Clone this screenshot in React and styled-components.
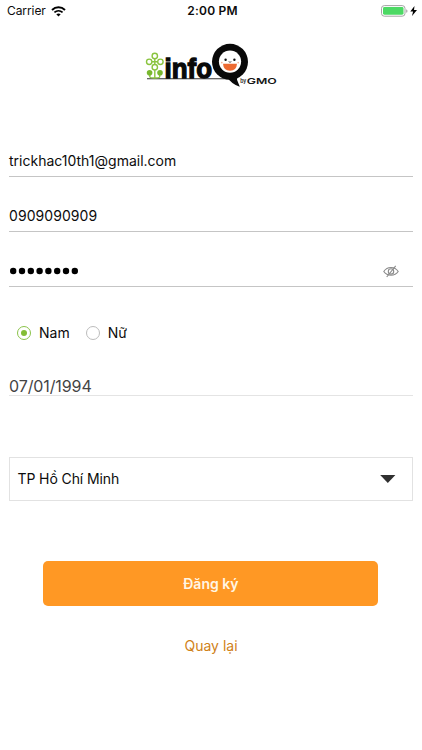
import React from 'react';
import styled, { createGlobalStyle } from 'styled-components';

const GlobalStyle = createGlobalStyle`
  * { box-sizing: border-box; }
  body { margin: 0; background: #fff; font-family: Inter, "Liberation Sans", sans-serif; color: #0c0c0c; }
  button { font-family: inherit; border: 0; padding: 0; }
`;

const Screen = styled.main`
  display: flex;
  flex-direction: column;
  width: 422px;
  height: 750px;
  overflow: hidden;
  background: #fff;
`;

const StatusBar = styled.header`
  display: grid;
  grid-template-columns: 1fr auto 1fr;
  align-items: center;
  height: 22px;
  padding: 0 4px 0 7px;
  font-size: 12px;
  line-height: 22px;
`;

const Carrier = styled.div`
  display: flex;
  align-items: center;
  gap: 5px;
  letter-spacing: -0.08px;
`;

const Clock = styled.div`
  font-weight: 600;
  letter-spacing: 0.2px;
`;

const Power = styled.div`
  display: flex;
  justify-content: flex-end;
`;

const Brand = styled.div`
  display: flex;
  margin: 16px 0 0 140px;
  height: 55px;
`;

const Form = styled.form`
  display: flex;
  flex-direction: column;
  margin: 53px 9px 0;
`;

const Field = styled.div`
  display: flex;
  align-items: center;
  justify-content: space-between;
  height: 31px;
  margin-bottom: 24px;
  padding-right: 14px;
  border-bottom: 1px solid #c5c5c5;
  font-size: 14px;
  line-height: 30px;
  letter-spacing: ${(p) => p.$spacing || '0'};
`;

const RadioGroup = styled.div`
  display: flex;
  align-items: center;
  height: 20px;
  margin: 12px 0 0 8px;
  gap: 16px;
`;

const RadioOption = styled.label`
  display: flex;
  align-items: center;
  gap: 8px;
  font-size: 14px;
  line-height: 20px;
`;

const RadioMark = styled.span`
  display: flex;
  align-items: center;
  justify-content: center;
  width: 14px;
  height: 14px;
  border: 1px solid ${(p) => (p.$checked ? '#8bc34a' : '#bcbcbc')};
  border-radius: 50%;

  &::after {
    content: '';
    width: 6px;
    height: 6px;
    border-radius: 50%;
    background: ${(p) => (p.$checked ? '#83bd35' : 'transparent')};
  }
`;

const DateField = styled.div`
  height: 21px;
  margin-top: 32px;
  border-bottom: 1px solid #e4e4e4;
  color: #444;
  font-size: 16px;
  line-height: 22px;
  letter-spacing: -0.1px;
`;

const Select = styled.div`
  display: flex;
  align-items: center;
  justify-content: space-between;
  height: 44px;
  margin-top: 61px;
  padding: 0 16.5px 0 7.5px;
  border: 1px solid #e2e2e2;
  font-size: 14px;
  letter-spacing: -0.1px;
`;

const SelectValue = styled.span`
  padding-bottom: 2px;
`;

const Submit = styled.button`
  width: 335px;
  height: 45px;
  margin: 60px 0 0 34.4px;
  border-radius: 5px;
  background: #ff9824;
  color: #fff6e4;
  font-size: 14px;
  font-weight: 600;
`;

const Back = styled.button`
  align-self: center;
  height: 20px;
  margin-top: 30px;
  background: none;
  color: #cf8118;
  font-size: 14px;
  line-height: 20px;
`;

const WifiIcon = () => (
  <svg width="15" height="11" viewBox="0 0 15 11" fill="none">
    <path d="M1 3.9C4.7.5 10.3.5 14 3.9" stroke="#000" strokeWidth="2" />
    <path d="M3.4 6.4c2.4-2.1 5.8-2.1 8.2 0" stroke="#000" strokeWidth="1.8" />
    <path d="M5.3 8.3c1.3-1.1 3.1-1.1 4.4 0L7.5 10.5Z" fill="#000" />
  </svg>
);

const BatteryIcon = () => (
  <svg width="37" height="12" viewBox="0 0 37 12">
    <rect x=".5" y=".6" width="23.5" height="10.6" rx="2.8" fill="#fff" stroke="#a4a4a4" />
    <rect x="2" y="2.1" width="20.5" height="7.6" rx="1.4" fill="#4cd964" />
    <path d="M25.2 4.2q1.3.4 1.3 1.8t-1.3 1.8Z" fill="#a4a4a4" />
    <path d="M33.5 1 29.3 6.5h2.8l-1.1 4.4 5-5.8h-3Z" fill="#000" />
  </svg>
);

const PasswordDots = () => (
  <svg width="72" height="8" viewBox="0 0 72 8">
    {Array.from({ length: 8 }, (_, i) => (
      <circle key={i} cx={4.2 + i * 8.8} cy="4" r="3.2" fill="#000" />
    ))}
  </svg>
);

const HiddenIcon = () => (
  <svg width="16" height="13" viewBox="0 0 16 13" fill="none" stroke="#8a8a8a" strokeWidth="1.1">
    <path d="M.8 6.5C4.2 1.2 11.8 1.2 15.2 6.5 11.8 11.4 4.2 11.4.8 6.5Z" />
    <circle cx="8" cy="6.4" r="2.7" />
    <path d="m12.7.8-9 11.2" />
  </svg>
);

const ArrowIcon = () => (
  <svg width="16" height="8" viewBox="0 0 16 8">
    <path d="M.2 0h15.2L7.8 8Z" fill="#303030" />
  </svg>
);

const Logo = () => (
  <svg width="140" height="55" viewBox="0 0 140 55">
    <path d="M7 40.8h83" stroke="#333" strokeWidth="1.1" />
    <g fill="none" stroke="#8ac43f" strokeWidth="1.4">
      <circle cx="14.8" cy="18" r="2.7" />
      <circle cx="9.2" cy="23.8" r="2.7" />
      <circle cx="20.4" cy="23.8" r="2.7" />
      <circle cx="14.8" cy="29.2" r="2.7" />
      <path d="M14.8 21v5M12 23.8h5.6M14.8 32v8.5M9.8 36v2.8q0 1.2 5 1.2 4.9 0 4.9-1.2V36" />
    </g>
    <g fill="#79b82f">
      <circle cx="9.6" cy="34.7" r="2.8" />
      <circle cx="20" cy="34.7" r="2.8" />
    </g>
    <text x="24.5" y="40.3" textLength="47.5" lengthAdjust="spacingAndGlyphs" fontFamily="Liberation Sans, sans-serif" fontSize="28" fontWeight="700" fill="#090909" stroke="#090909" strokeWidth="1.3">info</text>
    <circle cx="90" cy="23.8" r="18" fill="#090909" />
    <path d="M86.5 38.5h10.8l-.3 3.3 2.8 6.9q-8-2.2-13.3-10.2Z" fill="#090909" />
    <circle cx="90" cy="23.6" r="11.1" fill="#fff" />
    <path d="M83 25.8h14Q96.5 32.8 90 32.8t-7-7Z" fill="#ed6930" />
    <path d="M88.6 23.6q1.4 1.4 2.8 0" fill="none" stroke="#333" strokeWidth=".8" />
    <circle cx="85.6" cy="21.8" r="1.2" fill="#111" />
    <circle cx="94.4" cy="21.8" r="1.2" fill="#111" />
    <circle cx="81.8" cy="24.6" r=".9" fill="#f5b79b" />
    <circle cx="98.2" cy="24.6" r=".9" fill="#f5b79b" />
    <text x="100.2" y="45.4" textLength="6" lengthAdjust="spacingAndGlyphs" fontFamily="Inter, sans-serif" fontSize="5.8" fontWeight="600" fill="#222">by</text>
    <text x="106.8" y="45.8" textLength="30" lengthAdjust="spacingAndGlyphs" fontFamily="Inter, sans-serif" fontSize="7.8" fontWeight="600" fill="#151515">GMO</text>
  </svg>
);

export default function App() {
  return (
    <>
      <GlobalStyle />
      <Screen>
        <StatusBar>
          <Carrier>Carrier <WifiIcon /></Carrier>
          <Clock>2:00 PM</Clock>
          <Power><BatteryIcon /></Power>
        </StatusBar>
        <Brand><Logo /></Brand>
        <Form>
          <Field>trickhac10th1@gmail.com</Field>
          <Field $spacing="0.07px">0909090909</Field>
          <Field>
            <PasswordDots />
            <HiddenIcon />
          </Field>
          <RadioGroup>
            <RadioOption><RadioMark $checked />Nam</RadioOption>
            <RadioOption><RadioMark />Nữ</RadioOption>
          </RadioGroup>
          <DateField>07/01/1994</DateField>
          <Select><SelectValue>TP Hồ Chí Minh</SelectValue><ArrowIcon /></Select>
          <Submit type="button">Đăng ký</Submit>
          <Back type="button">Quay lại</Back>
        </Form>
      </Screen>
    </>
  );
}
